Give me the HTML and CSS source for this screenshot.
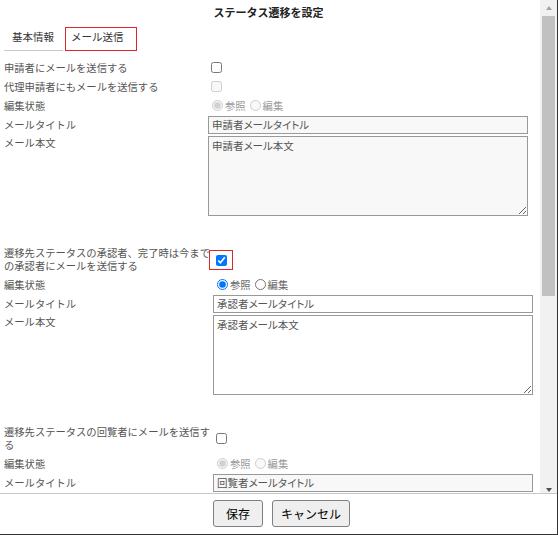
FILE: index.html
```html
<!DOCTYPE html>
<html lang="ja">
<head>
  <meta charset="UTF-8">
  <title>ステータス遷移を設定</title>
  <link rel="stylesheet" href="styles.css">
</head>
<body>
  <div class="dialog">
    <div class="dialog-body">
      <div class="scroll-area">
        <h1 class="title">ステータス遷移を設定</h1>

        <!-- Tabs -->
        <div class="tabs">
          <span class="tab">基本情報</span>
          <span class="tab active">メール送信</span>
        </div>

        <!-- Applicant -->
        <div class="form form-a">
          <div class="lbl">申請者にメールを送信する</div>
          <div class="ctl"><input type="checkbox"></div>

          <div class="lbl">代理申請者にもメールを送信する</div>
          <div class="ctl"><input type="checkbox" disabled></div>

          <div class="lbl">編集状態</div>
          <div class="ctl">
            <label class="opt off"><input type="radio" name="a" checked disabled>参照</label>
            <label class="opt off"><input type="radio" name="a" disabled>編集</label>
          </div>

          <div class="lbl">メールタイトル</div>
          <div class="ctl"><input type="text" class="text off" value="申請者メールタイトル" readonly></div>

          <div class="lbl top">メール本文</div>
          <div class="ctl area"><textarea class="memo off" readonly>申請者メール本文</textarea></div>
        </div>

        <!-- Approver -->
        <div class="form form-b">
          <div class="lbl wrap">遷移先ステータスの承認者、完了時は今までの承認者にメールを送信する</div>
          <div class="ctl"><span class="mark"><input type="checkbox" checked></span></div>

          <div class="lbl">編集状態</div>
          <div class="ctl">
            <label class="opt"><input type="radio" name="b" checked>参照</label>
            <label class="opt"><input type="radio" name="b">編集</label>
          </div>

          <div class="lbl">メールタイトル</div>
          <div class="ctl"><input type="text" class="text" value="承認者メールタイトル"></div>

          <div class="lbl top">メール本文</div>
          <div class="ctl area"><textarea class="memo">承認者メール本文</textarea></div>
        </div>

        <!-- Circulation -->
        <div class="form form-b">
          <div class="lbl wrap">遷移先ステータスの回覧者にメールを送信する</div>
          <div class="ctl"><input type="checkbox"></div>

          <div class="lbl">編集状態</div>
          <div class="ctl">
            <label class="opt off"><input type="radio" name="c" checked disabled>参照</label>
            <label class="opt off"><input type="radio" name="c" disabled>編集</label>
          </div>

          <div class="lbl">メールタイトル</div>
          <div class="ctl"><input type="text" class="text off" value="回覧者メールタイトル" readonly></div>
        </div>
      </div>

      <div class="scrollbar">
        <div class="sb-btn sb-up"><span class="tri-up"></span></div>
        <div class="sb-thumb"></div>
        <div class="sb-fill"></div>
        <div class="sb-btn sb-down"><span class="tri-down"></span></div>
      </div>
    </div>

    <div class="footer">
      <button class="btn">保存</button>
      <button class="btn">キャンセル</button>
    </div>
  </div>
</body>
</html>
```

FILE: styles.css
```css
* {
  margin: 0;
  padding: 0;
  box-sizing: border-box;
}

html, body {
  width: 558px;
  height: 535px;
  overflow: hidden;
}

body {
  font-family: "Noto Sans CJK JP", sans-serif;
  background: #fff;
  color: #555;
}

.dialog {
  width: 558px;
  height: 535px;
  border-right: 1px solid #333;
  border-bottom: 1px solid #333;
  display: flex;
  flex-direction: column;
}

.dialog-body {
  height: 493px;
  display: flex;
}

.scroll-area {
  flex: 1;
  overflow: hidden;
  padding-left: 4px;
}

.title {
  font-size: 11px;
  font-weight: bold;
  color: #222;
  text-align: center;
  line-height: 19px;
  padding: 3px 7px 0 0;
}

/* tabs */
.tabs {
  display: flex;
  margin-top: 5px;
  height: 24px;
}

.tab {
  height: 24px;
  font-size: 10.5px;
  line-height: 20px;
  color: #333;
  padding: 0 9px 0 8px;
  border-bottom: 1px solid #c8c8c8;
}

.tab.active {
  border: 1px solid #e0242c;
  margin-left: 2px;
  padding: 0 12px 0 5px;
  line-height: 18px;
}

/* form rows */
.form {
  display: grid;
  grid-template-columns: 204px 320px;
  margin-top: 7px;
}

.form-b {
  grid-template-columns: 209px 320px;
  margin-top: 28px;
}

.lbl {
  min-height: 19px;
  display: flex;
  align-items: center;
  font-size: 10.3px;
  line-height: 13px;
  color: #555;
}

.lbl.top {
  align-items: flex-start;
  padding-top: 2px;
}

.lbl.wrap {
  min-height: 31px;
  padding: 3px 0;
  line-height: 12.5px;
}

.ctl {
  min-height: 19px;
  display: flex;
  align-items: center;
}

.ctl.area {
  align-items: flex-start;
  padding-top: 2px;
}

input[type="checkbox"] {
  width: 11px;
  height: 11px;
  margin: 0 0 0 3px;
}

.opt {
  display: flex;
  align-items: center;
  font-size: 10.3px;
  line-height: 13px;
  color: #666;
}

.opt.off {
  color: #999;
}

.opt input {
  width: 11px;
  height: 11px;
  margin: 0 2px 0 4px;
}

.mark {
  display: inline-flex;
  border: 1px solid #e0242c;
  padding: 4px 5px 3px 6px;
  margin-left: -4px;
}

.mark input[type="checkbox"] {
  margin: 0;
}

.text {
  width: 320px;
  height: 18px;
  border: 1px solid #999;
  padding: 0 3px;
  font-family: "Noto Sans CJK JP", sans-serif;
  font-size: 10.5px;
  font-feature-settings: "palt";
  color: #555;
  background: #fff;
  outline: none;
}

.memo {
  display: block;
  width: 320px;
  height: 80px;
  border: 1px solid #999;
  padding: 2px 3px;
  font-family: "Noto Sans CJK JP", sans-serif;
  font-size: 10.5px;
  line-height: 13px;
  font-feature-settings: "palt";
  color: #555;
  background: #fff;
  outline: none;
}

.text.off,
.memo.off {
  background: #f8f8f8;
}

/* scrollbar */
.scrollbar {
  width: 17px;
  background: #f1f1f1;
  display: flex;
  flex-direction: column;
  align-items: center;
}

.sb-btn {
  width: 17px;
  height: 16px;
  display: flex;
  justify-content: center;
}

.sb-up {
  align-items: center;
}

.sb-down {
  align-items: flex-end;
  padding-bottom: 1px;
}

.tri-up {
  border-left: 3.5px solid transparent;
  border-right: 3.5px solid transparent;
  border-bottom: 4px solid #a3a3a3;
}

.tri-down {
  border-left: 3.5px solid transparent;
  border-right: 3.5px solid transparent;
  border-top: 4px solid #505050;
}

.sb-thumb {
  width: 13px;
  height: 280px;
  background: #c1c1c1;
}

.sb-fill {
  flex: 1;
}

/* footer */
.footer {
  flex: 1;
  border-top: 1px solid #c8c8c8;
  display: flex;
  align-items: flex-start;
  gap: 9px;
  padding: 6px 0 0 213px;
}

.btn {
  min-width: 50px;
  height: 27px;
  padding: 0 8px;
  font-family: "Noto Sans CJK JP", sans-serif;
  font-size: 12px;
  color: #000;
  background: #efefef;
  border: 1px solid #808080;
  border-radius: 3px;
}
```
